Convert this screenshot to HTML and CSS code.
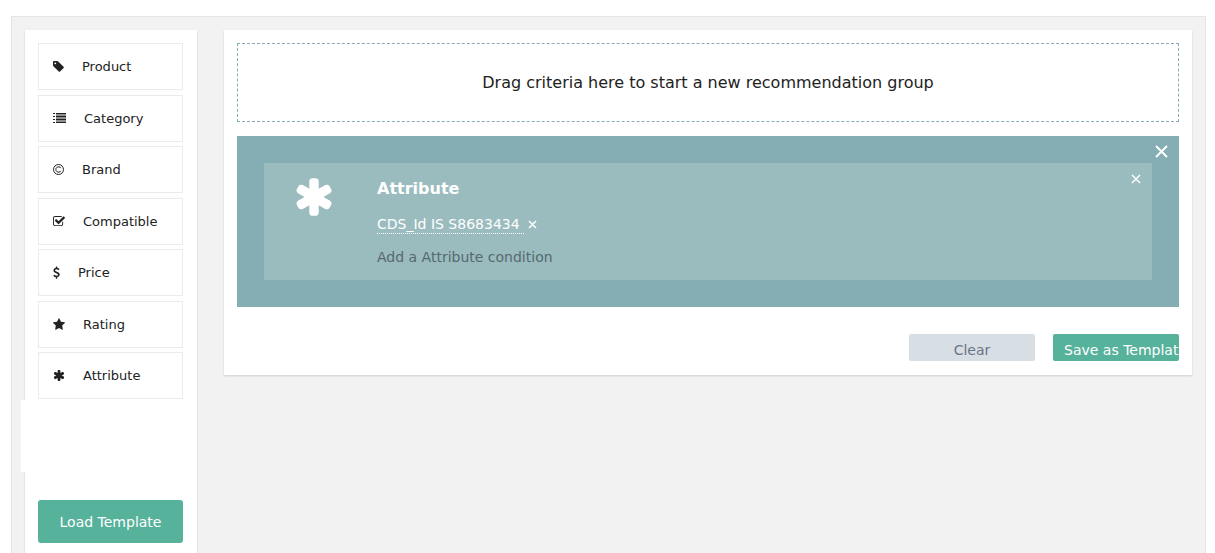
FILE: index.html
```html
<!DOCTYPE html>
<html lang="en">
    <head>
        <meta charset="utf-8">
        <title>Recommendations</title>
        <link rel="stylesheet" href="styles.css">
    </head>
    <body>
        <div class="builder">

            <!--CRITERIA-->
            <aside class="sidebar">
                <ul class="criteria">
                    <li class="criterion" draggable="true">
                        <svg class="icon" width="11" height="13" viewBox="0 0 1536 1792"><path d="M448 448q0-53-37.500-90.500t-90.500-37.500-90.500 37.500-37.500 90.500 37.500 90.500 90.500 37.500 90.500-37.500 37.500-90.500zm1067 576q0 53-37 90l-491 492q-39 37-91 37-53 0-90-37l-715-716q-38-37-64.500-101t-26.500-117v-416q0-52 38-90t90-38h416q53 0 117 26.500t102 64.500l715 714q37 39 37 91z"/></svg>
                        <span>Product</span>
                    </li>
                    <li class="criterion" draggable="true">
                        <svg class="icon" width="13" height="13" viewBox="0 0 13 13"><path d="M0 1h2v1H0zM3 1h10v1.500H3zM0 4h2v1H0zM3 3.500h10v2H3zM0 7h2v1H0zM3 6.500h10v2H3zM0 10h2v1H0zM3 9.500h10v1.500H3z"/></svg>
                        <span>Category</span>
                    </li>
                    <li class="criterion" draggable="true">
                        <svg class="icon icon-line" width="11" height="13" viewBox="0 0 11 13"><circle cx="5.500" cy="6.500" r="5"/><path d="M7.900 5.200A2.700 2.700 0 1 0 7.900 7.800"/></svg>
                        <span>Brand</span>
                    </li>
                    <li class="criterion" draggable="true">
                        <svg class="icon" width="12" height="13" viewBox="64 0 1664 1792"><path d="M1472 930v318q0 119-84.500 203.500t-203.500 84.500h-832q-119 0-203.500-84.500t-84.500-203.500v-832q0-119 84.500-203.500t203.500-84.500h832q63 0 117 25 15 7 18 23 3 17-9 29l-49 49q-10 10-23 10-3 0-9-2-23-6-45-6h-832q-66 0-113 47t-47 113v832q0 66 47 113t113 47h832q66 0 113-47t47-113v-254q0-13 9-22l64-64q10-10 23-10 6 0 12 3 20 8 20 29zm231-489l-814 814q-24 24-57 24t-57-24l-430-430q-24-24-24-57t24-57l110-110q24-24 57-24t57 24l263 263 647-647q24-24 57-24t57 24l110 110q24 24 24 57t-24 57z"/></svg>
                        <span>Compatible</span>
                    </li>
                    <li class="criterion" draggable="true">
                        <svg class="icon" width="7" height="13" viewBox="384 0 1024 1792"><path d="M1362 1185q0 153-99.500 263.500t-258.500 136.500v175q0 14-9 23t-23 9h-135q-13 0-22.500-9.500t-9.500-22.500v-175q-66-9-127.500-31t-101.500-44.500-74-48-46.500-37.500-17.500-18q-17-21-2-41l103-135q7-10 23-12 15-2 24 9l2 2q113 99 243 125 37 8 74 8 81 0 142.500-43t61.500-122q0-28-15-53t-33.500-42-58.500-37.500-66-32-80-32.500q-39-16-61.500-25t-61.500-26.500-62.500-31-56.500-35.500-53.500-42.500-43.500-49-35.500-58-21-66.500-8.500-78q0-138 98-242t255-134v-180q0-13 9.500-22.500t22.500-9.500h135q14 0 23 9t9 23v176q57 6 110.500 23t87 33.500 63.500 37.500 39 29 15 14q17 18 5 38l-81 146q-8 15-23 16-14 3-27-7-3-3-14.500-12t-39-26.500-58.500-32-74.500-26-85.500-11.500q-95 0-155 43t-60 111q0 26 8.500 48t29.500 41.500 39.500 33 56 31 60.500 27 70 27.500q53 20 81 31.500t76 35 75.500 42.500 62 50 53 63.500 31.500 76.500 13 94z"/></svg>
                        <span>Price</span>
                    </li>
                    <li class="criterion" draggable="true">
                        <svg class="icon" width="12" height="13" viewBox="64 0 1664 1792"><path d="M1728 647q0 22-26 48l-363 354 86 500q1 7 1 20 0 21-10.500 35.500t-30.500 14.500q-19 0-40-12l-449-236-449 236q-22 12-40 12-21 0-31.500-14.500t-10.500-35.500q0-6 2-20l86-500-364-354q-25-27-25-48 0-37 56-46l502-73 225-455q19-41 49-41t49 41l225 455 502 73q56 9 56 46z"/></svg>
                        <span>Rating</span>
                    </li>
                    <li class="criterion" draggable="true">
                        <svg class="icon" width="12" height="13" viewBox="64 0 1664 1792"><path id="asterisk" d="M1546 1050q46 26 59.500 77.500t-12.500 97.500l-64 110q-26 46-77.500 59.500t-97.500-12.500l-266-153v307q0 52-38 90t-90 38h-128q-52 0-90-38t-38-90v-307l-266 153q-46 26-97.500 12.500t-77.500-59.500l-64-110q-26-46-12.500-97.500t59.500-77.500l266-154-266-154q-46-26-59.500-77.500t12.500-97.500l64-110q26-46 77.500-59.500t97.500 12.500l266 153v-307q0-52 38-90t90-38h128q52 0 90 38t38 90v307l266-153q46-26 97.500-12.500t77.500 59.500l64 110q26 46 12.500 97.500t-59.500 77.500l-266 154z"/></svg>
                        <span>Attribute</span>
                    </li>
                </ul>
                <div class="spacer"></div>
                <button type="button" class="btn btn-load">Load Template</button>
            </aside>

            <!--RECOMMENDATION GROUPS-->
            <main class="panel">
                <div class="dropzone">Drag criteria here to start a new recommendation group</div>

                <section class="group">
                    <button type="button" class="close close-group" aria-label="Remove group">
                        <svg width="13" height="13" viewBox="0 0 13 13"><path d="M1 1l11 11M12 1L1 12"/></svg>
                    </button>
                    <div class="rule">
                        <svg class="rule-icon" width="42" height="44" viewBox="64 0 1664 1792"><use href="#asterisk"/></svg>
                        <div class="rule-body">
                            <h2>Attribute</h2>
                            <p>
                                <a href="#" class="condition">CDS_Id IS S8683434&nbsp;</a>
                                <button type="button" class="close" aria-label="Remove condition">
                                    <svg width="9" height="9" viewBox="0 0 9 9"><path d="M1 1l7 7M8 1L1 8"/></svg>
                                </button>
                            </p>
                            <a href="#" class="add">Add a Attribute condition</a>
                        </div>
                        <button type="button" class="close close-rule" aria-label="Remove rule">
                            <svg width="10" height="10" viewBox="0 0 10 10"><path d="M1 1l8 8M9 1L1 9"/></svg>
                        </button>
                    </div>
                </section>

                <div class="actions">
                    <button type="button" class="btn btn-clear">Clear</button>
                    <button type="button" class="btn btn-save">Save as Template</button>
                </div>
            </main>

        </div>
    </body>
</html>
```
FILE: styles.css
```css
* {
    box-sizing: border-box;
}

body {
    margin: 0;
    background: #fff;
    color: #222;
    font-family: Verdana, "DejaVu Sans", sans-serif;
    font-size: 14px;
}

button {
    font: inherit;
    border: 0;
    cursor: pointer;
}

.builder {
    display: flex;
    align-items: flex-start;
    gap: 27px;
    min-height: calc(100vh - 16px);
    margin: 16px 9px 0 11px;
    padding: 13px 13px 0;
    background: #f2f2f2;
    border: 1px solid #e4e4e4;
    border-width: 1px 1px 0;
}

.sidebar,
.panel {
    padding: 13px;
    background: #fff;
    box-shadow: 0 1px 2px rgba(0, 0, 0, 0.15);
}

.sidebar {
    flex: none;
    align-self: stretch;
    width: 172px;
    padding: 13px 14px 10px 13px;
}

.criteria {
    display: flex;
    flex-direction: column;
    justify-content: space-between;
    height: 356px;
    margin: 0;
    padding: 0;
    list-style: none;
}

.criterion {
    display: flex;
    align-items: center;
    gap: 18px;
    height: 47px;
    padding: 0 14px;
    border: 1px solid #ebebeb;
    font-size: 13px;
    cursor: move;
}

.icon {
    flex: none;
    fill: currentColor;
}

.icon-line {
    fill: none;
    stroke: currentColor;
}

.spacer {
    width: 100px;
    height: 72px;
    margin: 1px 0 28px -17px;
    background: #fff;
}

.btn {
    border-radius: 2px;
    white-space: nowrap;
    overflow: hidden;
}

.btn-load {
    width: 100%;
    height: 43px;
    border-radius: 3px;
    background: #56b29b;
    color: #fff;
}

.panel {
    flex: 1;
    min-width: 0;
    padding-bottom: 14px;
}

.dropzone {
    padding: 28px 0 27px;
    border: 1px dashed #84aeb4;
    font-size: 16px;
    line-height: 22px;
    text-align: center;
}

.group {
    position: relative;
    margin-top: 14px;
    padding: 27px;
    background: #84aeb4;
}

.rule {
    position: relative;
    display: flex;
    gap: 42px;
    padding: 14px 29px;
    background: #9abcbe;
    color: #fff;
}

.rule-icon {
    flex: none;
    margin-top: -2px;
    fill: #fff;
}

.rule-body h2 {
    margin: 0 0 14px;
    font-size: 16px;
    line-height: 24px;
}

.rule-body p {
    display: flex;
    align-items: center;
    gap: 4px;
    margin: 0 0 14px;
}

.condition {
    border-bottom: 1px dotted #fff;
    color: #fff;
    line-height: 18px;
    text-decoration: none;
}

.add {
    display: block;
    color: #56696e;
    line-height: 18px;
    text-decoration: none;
}

.close {
    display: block;
    padding: 0;
    background: none;
    line-height: 0;
}

.close svg {
    fill: none;
    stroke: #fff;
    stroke-width: 1.5;
}

.close-group svg {
    stroke-width: 2;
}

.close-group {
    position: absolute;
    top: 9px;
    right: 11px;
}

.close-rule {
    position: absolute;
    top: 11px;
    right: 11px;
}

.actions {
    display: flex;
    justify-content: flex-end;
    gap: 18px;
    margin-top: 27px;
}

.actions .btn {
    width: 126px;
    height: 27px;
    padding: 5px 11px 0;
    line-height: 22px;
}

.btn-clear {
    background: #d7dee4;
    color: #6b7486;
}

.actions .btn-save {
    padding-right: 0;
    background: #56b29b;
    color: #fff;
    text-align: left;
}
```
